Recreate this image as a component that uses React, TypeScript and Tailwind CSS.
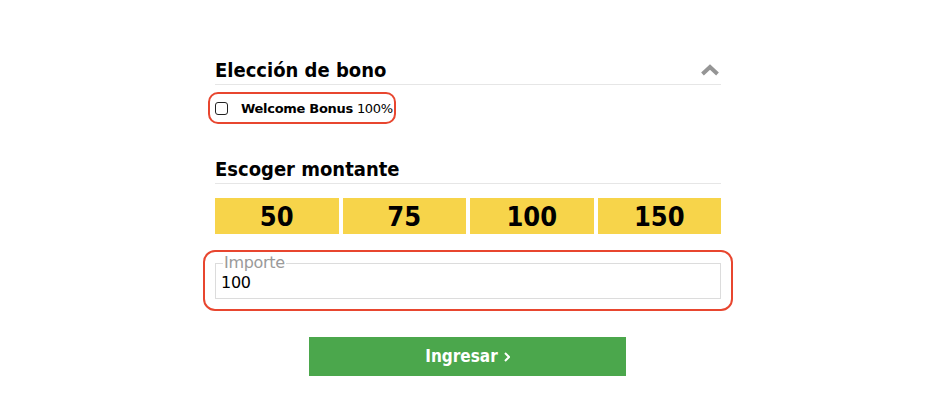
import React, { useState } from "react"

const amounts = [50, 75, 100, 150]

export default function App() {
  const [amount, setAmount] = useState("100")
  const [bonus, setBonus] = useState(false)

  return (
    <div className="min-h-[400px] bg-white font-['DejaVu_Sans',Verdana,sans-serif] text-black">
      <div className="w-[506px] ml-[215px] pt-[57px]">
        {/* bonus section */}
        <div className="flex items-center justify-between border-b border-[#e6e6e6] pb-[1px]">
          <h2 className="font-['DejaVu_Sans_Condensed','DejaVu_Sans',sans-serif] text-[20px] leading-[26px] font-bold">Elección de bono</h2>
          <svg width="20" height="12" viewBox="0 0 20 12" className="mr-[1px]">
            <polyline points="2.5,10 10,3 17.5,10" fill="none" stroke="#959595" strokeWidth="4" />
          </svg>
        </div>

        <div className="mt-[7px]">
          <label className="-ml-[7px] inline-flex items-center h-[32px] pl-[5px] pr-[1px] pt-[1px] border-2 border-[#e8462f] rounded-[10px] cursor-pointer">
            <span className="w-[13px] h-[13px] border-[1.5px] border-[#222] rounded-[3px] bg-white">
              <input type="checkbox" className="hidden" checked={bonus} onChange={() => setBonus(!bonus)} />
            </span>
            <span className="ml-[13px] text-[13px] font-bold tracking-[-0.3px]">Welcome Bonus</span>
            <span className="ml-[4px] text-[13px] tracking-[-0.3px]">100%</span>
          </label>
        </div>

        {/* amount section */}
        <div className="mt-[32px] border-b border-[#e6e6e6] pb-[1px]">
          <h2 className="font-['DejaVu_Sans_Condensed','DejaVu_Sans',sans-serif] text-[20px] leading-[26px] font-bold">Escoger montante</h2>
        </div>

        <div className="mt-[14px] grid grid-cols-4 gap-[4px]">
          {amounts.map((a) => (
            <button
              key={a}
              onClick={() => setAmount(String(a))}
              className="h-[36px] bg-[#f7d44a] font-['DejaVu_Sans_Condensed','DejaVu_Sans',sans-serif] text-[27px] font-bold leading-none"
            >
              {a}
            </button>
          ))}
        </div>

        <div className="-mx-[12px] mt-[16px] border-2 border-[#e8462f] rounded-[12px] px-[10px] pt-[3px] pb-[10px]">
          <fieldset className="border border-[#dcdcdc] px-[5px] pb-[3px]">
            <legend className="px-[1px] ml-[2px] text-[16px] leading-[16px] text-[#9a9a9a] tracking-[-0.3px]">Importe</legend>
            <input
              value={amount}
              onChange={(e) => setAmount(e.target.value)}
              className="w-full text-[16px] leading-[18px] outline-none bg-transparent tracking-[-0.3px]"
            />
          </fieldset>
        </div>

        <div className="flex justify-center mt-[26px] pr-[1px]">
          <button className="w-[317px] h-[39px] bg-[#4ba74c] text-white font-['DejaVu_Sans_Condensed','DejaVu_Sans',sans-serif] text-[17px] font-bold flex items-center justify-center gap-[6px]">
            Ingresar
            <svg width="6" height="10" viewBox="0 0 6 10">
              <polyline points="1,1 5,5 1,9" fill="none" stroke="white" strokeWidth="2" />
            </svg>
          </button>
        </div>
      </div>
    </div>
  )
}
